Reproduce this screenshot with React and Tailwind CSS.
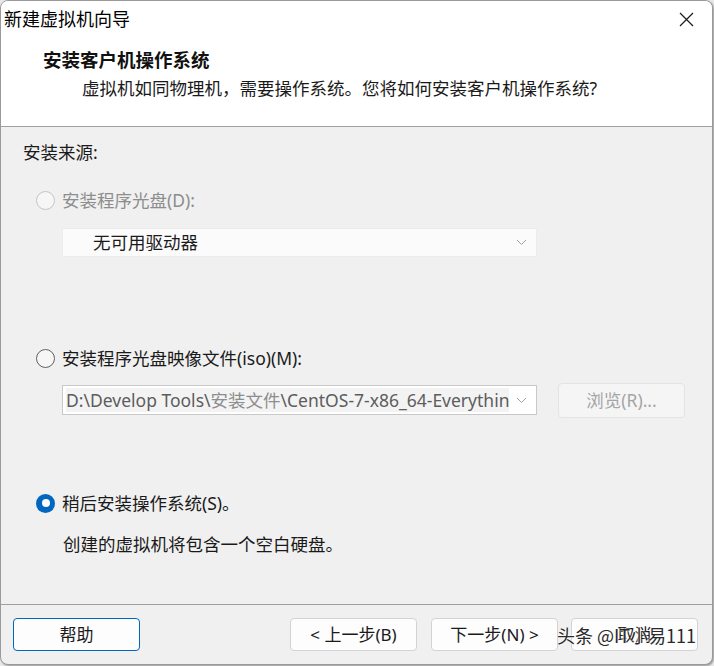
import React from 'react';

const font = "font-['Noto_Sans','Noto_Sans_CJK_SC',sans-serif]";

const Radio = ({ checked, disabled }) => {
  if (checked) {
    return (
      <span className="w-[19px] h-[19px] rounded-full bg-[#0067c0] flex items-center justify-center shrink-0">
        <span className="w-[8px] h-[8px] rounded-full bg-white" />
      </span>
    );
  }
  return (
    <span
      className={
        'w-[19px] h-[19px] rounded-full border bg-[#f6f6f6] shrink-0 ' +
        (disabled ? 'border-[#c5c5c5]' : 'border-[#5f5f5f]')
      }
    />
  );
};

const Chevron = () => (
  <svg width="11" height="7" viewBox="0 0 11 7" className="shrink-0">
    <path d="M1 1 L5.5 5.5 L10 1" fill="none" stroke="#a0a0a0" strokeWidth="1" />
  </svg>
);

const Button = ({ children, primary, className = '' }) => (
  <button
    className={
      'h-[33px] w-[127px] rounded-[4px] bg-[#fdfdfd] text-[17px] text-[#1a1a1a] flex items-center justify-center ' +
      (primary ? 'border border-[#0067c0] ' : 'border border-[#d3d3d3] ') +
      className
    }
  >
    {children}
  </button>
);

export default function App() {
  return (
    <div className={`${font} w-[714px] h-[666px] bg-[#e9e9e9]`}>
      <div className="w-[713px] h-[665px] flex flex-col bg-[#f0f0f0] border border-[#9a9a9a] rounded-[8px] overflow-hidden shadow-[1px_1px_2px_rgba(0,0,0,0.35)]">
        {/* title bar */}
        <div className="h-[36px] bg-white flex items-center justify-between pl-[3px] pr-[18px]">
          <span className="text-[18px] text-black leading-none">新建虚拟机向导</span>
          <svg width="15" height="15" viewBox="0 0 15 15">
            <path d="M1 1 L14 14 M14 1 L1 14" stroke="#1a1a1a" strokeWidth="1.2" />
          </svg>
        </div>

        {/* header */}
        <div className="h-[90px] bg-white border-b border-[#a0a0a0] pl-[42px] pt-[12px]">
          <div className="text-[18.5px] font-bold leading-[22px] text-[#111]">安装客户机操作系统</div>
          <div className="text-[17.5px] leading-[22px] mt-[6px] pl-[39px] text-[#1a1a1a]">
            虚拟机如同物理机，需要操作系统。您将如何安装客户机操作系统?
          </div>
        </div>

        {/* body */}
        <div className="flex-1 pl-[22px] pt-[14px] text-[17.5px] text-[#1a1a1a]">
          <div className="leading-[22px]">安装来源:</div>

          <div className="flex items-center gap-[7px] mt-[26px] pl-[13px] h-[22px]">
            <Radio disabled />
            <span className="text-[#8d8d8d]">安装程序光盘(D):</span>
          </div>
          <div className="ml-[39px] mt-[17px] w-[475px] h-[29px] bg-[#fbfbfb] border border-[#ececec] flex items-center justify-between pl-[30px] pr-[9px]">
            <span className="text-[#1a1a1a]">无可用驱动器</span>
            <Chevron />
          </div>

          <div className="flex items-center gap-[7px] mt-[90px] pl-[13px] h-[22px]">
            <Radio />
            <span>安装程序光盘映像文件(iso)(M):</span>
          </div>
          <div className="flex items-center mt-[13px] h-[36px]">
            <div className="ml-[39px] w-[475px] h-[30px] bg-white border border-[#c9c9c9] flex items-center pl-[3px] pr-[9px]">
              <div className="w-[443px] h-[24px] bg-[#f3f3f3] overflow-hidden whitespace-nowrap flex items-center text-[17.5px]">
                <span className="text-[#5d5d5d]">D:\Develop Tools\</span>
                <span className="text-[#8d8d8d]">安装文件</span>
                <span className="text-[#5d5d5d]">\CentOS-7-x86_64-Everything-2009.iso</span>
              </div>
              <span className="ml-auto">
                <Chevron />
              </span>
            </div>
            <div className="ml-[21px] w-[127px] h-[35px] rounded-[4px] bg-[#f5f5f5] border border-[#e3e3e3] flex items-center justify-center text-[#a5a5a5]">
              浏览(R)...
            </div>
          </div>

          <div className="flex items-center gap-[7px] mt-[74px] pl-[13px] h-[22px]">
            <Radio checked />
            <span>稍后安装操作系统(S)。</span>
          </div>
          <div className="mt-[19px] pl-[40px] leading-[22px]">创建的虚拟机将包含一个空白硬盘。</div>
        </div>

        {/* footer */}
        <div className="h-[60px] border-t border-[#a0a0a0] flex items-start pt-[13px] pl-[12px]">
          <Button primary>帮助</Button>
          <Button className="ml-[150px]">&lt; 上一步(B)</Button>
          <Button className="ml-[14px]">下一步(N) &gt;</Button>
          <div className="relative ml-[13px]">
            <Button>取消</Button>
            <span className="absolute left-[-14px] top-[6px] whitespace-nowrap text-[18px] leading-[22px] text-[#2a2a2a] [text-shadow:0_0_2px_#fff,0_0_2px_#fff] font-['Noto_Sans_CJK_SC',sans-serif]">
              头条 @IT小易111
            </span>
          </div>
        </div>
      </div>
    </div>
  );
}
